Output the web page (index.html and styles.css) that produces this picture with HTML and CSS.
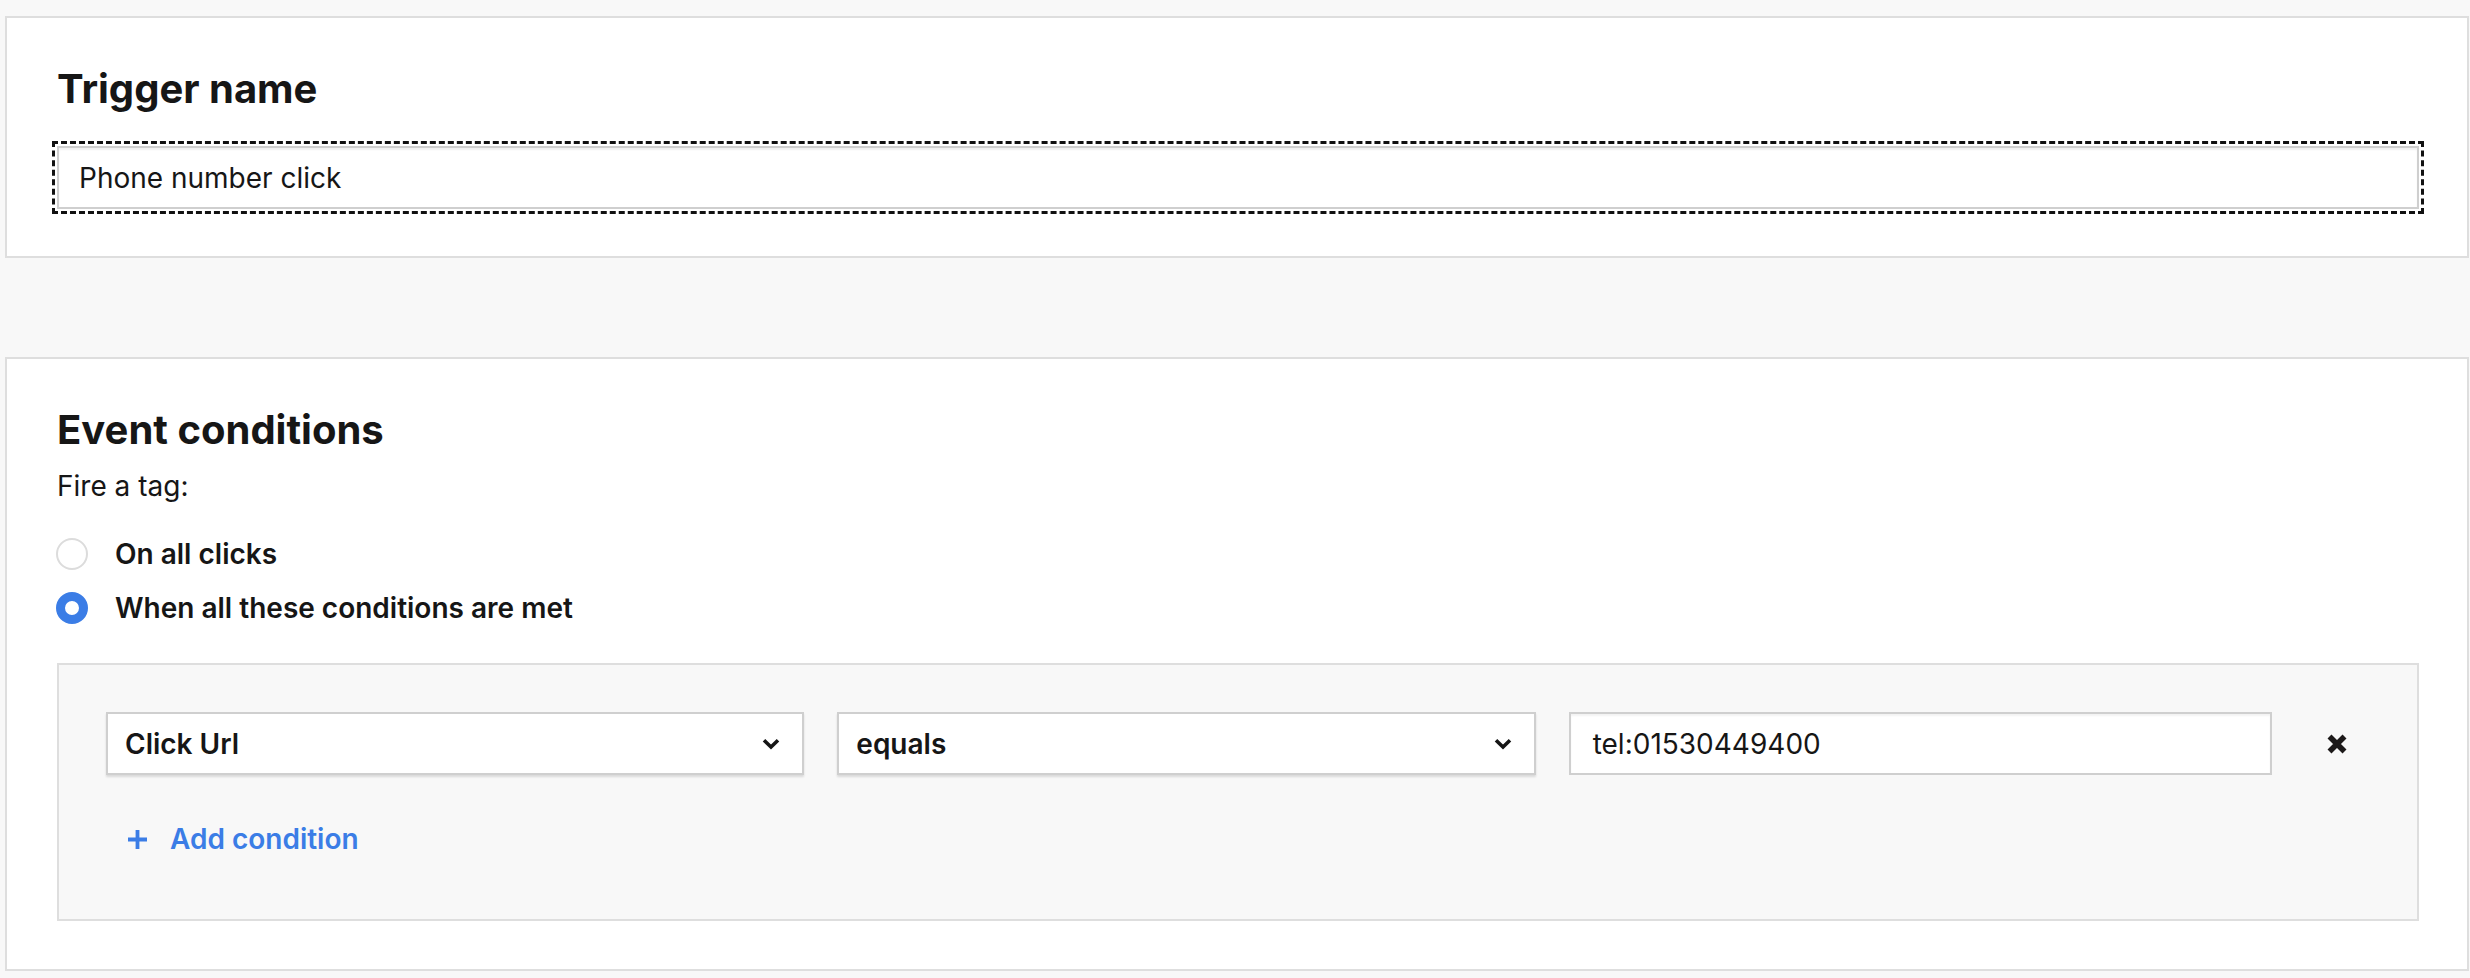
FILE: index.html
```html
<!DOCTYPE html>
<html lang="en">
<head>
<meta charset="utf-8">
<title>Trigger</title>
<link rel="stylesheet" href="styles.css">
</head>
<body>
<div class="page">
  <section class="card card-name">
    <h2 class="card-title">Trigger name</h2>
    <div class="text-field focused">Phone number click</div>
  </section>

  <section class="card card-conditions">
    <h2 class="card-title">Event conditions</h2>
    <p class="fire-label">Fire a tag:</p>
    <div class="radio-list">
      <div class="radio-row"><span class="radio"></span><span class="radio-label">On all clicks</span></div>
      <div class="radio-row"><span class="radio checked"></span><span class="radio-label">When all these conditions are met</span></div>
    </div>
    <div class="cond-box">
      <div class="cond-row">
        <div class="select"><span>Click Url</span>
          <svg class="chev" width="18" height="12" viewBox="0 0 18 12"><path d="M2 2.2 L9 9 L16 2.2" fill="none" stroke="#161616" stroke-width="3.6"/></svg>
        </div>
        <div class="select"><span>equals</span>
          <svg class="chev" width="18" height="12" viewBox="0 0 18 12"><path d="M2 2.2 L9 9 L16 2.2" fill="none" stroke="#161616" stroke-width="3.6"/></svg>
        </div>
        <div class="value-field">tel:01530449400</div>
        <div class="remove">
          <svg width="22" height="22" viewBox="0 0 22 22"><path d="M3.5 3.5 L18.5 18.5 M18.5 3.5 L3.5 18.5" fill="none" stroke="#1c1919" stroke-width="5.6"/></svg>
        </div>
      </div>
      <div class="add-cond">
        <svg width="21" height="21" viewBox="0 0 21 21"><path d="M10.5 1 V20 M1 10.5 H20" fill="none" stroke="#3b7de6" stroke-width="3.8"/></svg>
        <span>Add condition</span>
      </div>
    </div>
  </section>
</div>
</body>
</html>
```

FILE: styles.css
```css
* { box-sizing: border-box; }

html, body {
  margin: 0;
  background: #f8f8f8;
}

body {
  font-family: Inter, "Noto Sans", "Liberation Sans", sans-serif;
  color: #161616;
}

.page {
  display: flex;
  flex-direction: column;
  gap: 99px;
  padding: 16px 1px 7px 5px;
}

.card {
  background: #fff;
  border: 2px solid #dedede;
  padding: 47px 48px 47px 50px;
}

.card-conditions {
  padding-bottom: 48px;
}

.card-title {
  margin: 0;
  font-size: 40px;
  line-height: 48px;
  font-weight: 700;
}

.text-field {
  margin-top: 33px;
  height: 63px;
  border: 2px solid #cfcfcf;
  box-shadow: inset 0 2px 2px rgba(0, 0, 0, 0.06);
  padding: 0 20px;
  display: flex;
  align-items: center;
  font-size: 28px;
}

.text-field.focused {
  outline: 3px dashed #111;
  outline-offset: 2px;
}

.fire-label {
  margin: 14px 0 0;
  font-size: 28px;
  line-height: 36px;
}

.radio-list {
  margin-top: 23px;
  display: flex;
  flex-direction: column;
}

.radio-row {
  height: 54px;
  display: flex;
  align-items: center;
  gap: 27px;
}

.radio {
  width: 32px;
  height: 32px;
  border-radius: 50%;
  border: 2px solid #dcdcdc;
  background: #fff;
  margin-left: -1px;
  flex: none;
}

.radio.checked {
  border: 9px solid #3b7de6;
}

.radio-label {
  font-size: 28px;
  font-weight: 600;
}

.cond-box {
  margin-top: 28px;
  background: #f8f8f8;
  border: 2px solid #dedede;
  padding: 47px 47px 62px 47px;
}

.cond-row {
  display: flex;
  gap: 33px;
  align-items: center;
}

.select, .value-field {
  flex: 1 1 0;
  height: 63px;
  background: #fff;
  border: 2px solid #cfcfcf;
  display: flex;
  align-items: center;
  font-size: 28px;
}

.select {
  justify-content: space-between;
  padding: 0 22px 0 17px;
  font-weight: 600;
  box-shadow: 0 2px 2px rgba(0, 0, 0, 0.12);
}

.value-field {
  padding: 0 22px;
  box-shadow: inset 0 2px 2px rgba(0, 0, 0, 0.05);
}

.remove {
  width: 65px;
  flex: none;
  display: flex;
  justify-content: center;
  align-items: center;
}

.add-cond {
  margin-top: 46px;
  height: 36px;
  display: flex;
  align-items: center;
  gap: 22px;
  padding-left: 21px;
  color: #3b7de6;
  font-size: 28px;
  font-weight: 600;
}
```
